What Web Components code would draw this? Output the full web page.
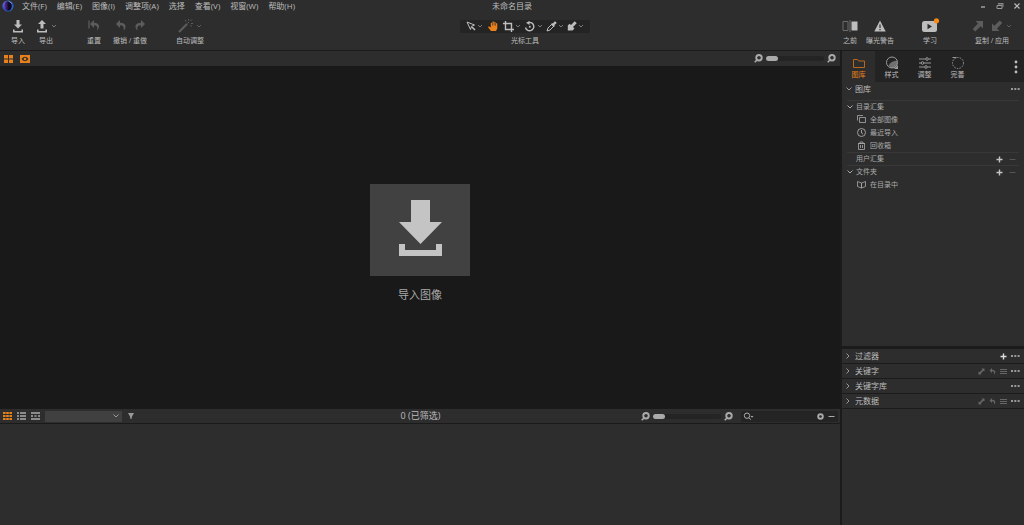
<!DOCTYPE html>
<html lang="zh-CN">
<head>
<meta charset="utf-8">
<meta name="viewport" content="width=device-width, initial-scale=1">
<title>未命名目录</title>
<style>
html, body { margin: 0; background: #1b1b1b; }
body {
  --panel: #2d2d2d; --dark: #232323; --line: #1a1a1a; --text: #bdbdbd; --dim: #5c5c5c; --accent: #e8811a;
  color: var(--text);
  font: 8px/12px "Open Sans", "Noto Sans CJK SC", sans-serif;
}
</style>
</head>
<body>
<photo-app></photo-app>
<script>
const RESET = `*{box-sizing:border-box}button,input,select{font:inherit;color:inherit;background:none;border:0;padding:0;margin:0;border-radius:0;outline-offset:-1px}button{display:flex;align-items:center;justify-content:center;cursor:pointer}ul{list-style:none;margin:0;padding:0}`;

function define(name, render) {
  customElements.define(name, class extends HTMLElement {
    constructor() { super(); this.attachShadow({ mode: 'open' }); }
    connectedCallback() {
      const t = document.createElement('template');
      const { css, html } = render(this);
      t.innerHTML = `<style>${RESET}${css}</style>${html}`;
      this.shadowRoot.replaceChildren(t.content.cloneNode(true));
    }
  });
}

const S = 'fill="none" stroke="currentColor"';
const ICONS = {
  logo: [12, 12, '<defs><linearGradient id="g" x1="0" y1="0" x2="1" y2="1"><stop stop-color="#6a7be0"/><stop offset=".5" stop-color="#2a4fc0"/><stop offset="1" stop-color="#2c6fd0"/></linearGradient><linearGradient id="h" x1="0" x2="1"><stop stop-color="#6d2fb4"/><stop offset=".6" stop-color="#0c0a20"/></linearGradient></defs><circle cx="6" cy="6" r="5.600" fill="url(#g)"/><ellipse cx="6" cy="6" rx="3.800" ry="4.800" fill="url(#h)"/><path d="M6.500 1 10 3.500" stroke="#7ab8e8" stroke-width=".8"/>'],
  import: [12, 13, '<path d="M4.500 0h3v4.500H10L6 8.500 2 4.500h2.500zM1 9.500h1.600V11h6.800V9.500H11v3H1z" fill="currentColor"/>'],
  export: [12, 13, '<path d="M4.500 8.500h3V4H10L6 0 2 4h2.500zM1 9.500h1.600V11h6.800V9.500H11v3H1z" fill="currentColor"/>'],
  undo: [12, 12, '<path d="M5 0 1 4l4 4V5.300c3 0 4.500 1.600 3.400 5.400C12.500 6.500 10.500 2.700 5 2.700z" fill="currentColor"/>'],
  redo: [12, 12, '<path d="M7 0l4 4-4 4V5.300c-3 0-4.500 1.600-3.400 5.400C-.5 6.500 1.500 2.700 7 2.700z" fill="currentColor"/>'],
  reset: [12, 12, '<path d="M1 .5v8" stroke="currentColor" stroke-width="1.300"/><path d="M6 0 2 4l4 4V5.300c3 0 4 1.600 2.900 5.400C13 6.500 11 2.700 6 2.700z" fill="currentColor"/>'],
  wand: [15, 14, '<path d="M1 13 9 5" stroke="currentColor" stroke-width="2.200"/><path d="M9.500 4.500 11 3M10.500 0v1.500M7 1l1.200 1.500M14 .5l-1.500 1.500M15 4.500h-2M13.500 7.500l-1-1.500" stroke="currentColor"/>'],
  chev: [6, 6, `<path d="M1 2l2 2 2-2" ${S}/>`],
  chevR: [6, 8, `<path d="M1.500 1.500 4 4 1.500 6.500" ${S}/>`],
  chevD: [8, 6, `<path d="M1.500 1.500 4 4l2.500-2.500" ${S}/>`],
  cursor: [10, 10, `<path d="M1 1l7.500 3-3 1.300L4.500 8.500z" ${S}/><path d="M6 6l3 3" ${S} stroke-width="1.500"/>`],
  hand: [10, 10, '<path d="M3 10 .2 6.500Q0 5 1.300 5.500L2.800 6.600V2q.6-.9 1.200 0v2.500h.5V.8q.6-.9 1.300 0v3.700h.5V1.200q.6-.9 1.200 0v3.500H8V2.500q.7-.9 1.300 0V7.500L8 10z" fill="currentColor"/>'],
  crop: [11, 11, `<path d="M2.500 0v8.500H11M0 2.500h8.500V11" ${S} stroke-width="1.400"/>`],
  rotate: [12, 11, `<path d="M4.500 1.500A4.200 4.200 0 1 1 1.500 6.500" ${S} stroke-width="1.400"/><path d="M5.500 0v4L2 1.800z" fill="currentColor"/><circle cx="5.800" cy="5.700" r="1" fill="currentColor"/>`],
  picker: [11, 11, `<path d="M1 10l1-3 4-4 2 2-4 4z" ${S}/><path d="M5 3.500 6 2l1 .5L8.500.5q2-.5 2 1.700L8.500 4l.3 1.300L7.500 6z" fill="currentColor"/>`],
  brush: [10, 10, '<path d="M7.700.3 9.700 2.300 6 6l1.500 1.500L5.500 9.500H.8V4.500L2.500 2.700 4 4z" fill="currentColor"/>'],
  before: [16, 14, '<path d="M1 2.500h5v9H1z" fill="none" stroke="#6c6c6c"/><path d="M8 1v12" stroke="#6c6c6c"/><path d="M9.500 2.500h6v9h-6z" fill="currentColor"/>'],
  warn: [12, 12, '<path d="M6 .5 11.700 11.500H.3z" fill="currentColor"/><path d="M6 4.500v3.500M6 9v1.200" stroke="#2d2d2d" stroke-width="1.200"/>'],
  learn: [18, 16, '<rect x="1" y="3" width="15" height="11" rx="2.500" fill="currentColor"/><path d="M6.500 5.800v5.400L11 8.500z" fill="#2d2d2d"/><circle cx="15.500" cy="2.800" r="2.600" fill="#f58a16"/>'],
  copy: [12, 12, '<path d="M3.500 1H11v7.500L8.700 6.200 3.200 11.500.7 9l5.300-5.500z" fill="currentColor"/>'],
  apply: [12, 12, '<path d="M1 3.500 3.300 5.800 8.800.5l2.500 2.500L6 8.500 8.500 11H1z" fill="currentColor"/>'],
  min: [6, 6, '<path d="M1 4h4" stroke="currentColor" stroke-width="1.200"/>'],
  restore: [8, 8, '<path d="M2 1h5.500v4H6.500V2.500H2z" fill="#888"/><path d="M1 3.500h5v3H1z" fill="none" stroke="#999"/>'],
  close: [6, 6, `<path d="M.5.5l5 5M5.500.5l-5 5" ${S} stroke-width="1.200"/>`],
  grid4: [9, 8, '<path d="M0 0h4v3.500H0zM5 0h4v3.500H5zM0 4.500h4V8H0zM5 4.500h4V8H5z" fill="currentColor"/>'],
  proof: [10, 8, '<path d="M0 0h10v8H0z" fill="currentColor"/><path d="M1.500 4Q5-.5 8.500 4 5 8.500 1.500 4z" fill="#2d2d2d"/><circle cx="5" cy="4" r="1.300" fill="currentColor"/>'],
  zoomOut: [9, 9, `<circle cx="5" cy="3.700" r="2.700" ${S} stroke-width="2"/><path d="M3 6 .7 8.300" ${S} stroke-width="1.600"/><path d="M3.500 3.700h3" stroke="#333"/>`],
  zoomIn: [9, 9, `<circle cx="5" cy="3.700" r="2.700" ${S} stroke-width="2"/><path d="M3 6 .7 8.300" ${S} stroke-width="1.600"/><path d="M3.500 3.700h3M5 2.200v3" stroke="#333"/>`],
  folder: [12, 11, `<path d="M.5 9.500v-8h4l1.200 1.500h5.800v6.500z" ${S}/>`],
  style: [14, 14, `<circle cx="7" cy="6.500" r="5.500" ${S}/><path d="M12 4.500Q6 5 3.500 9.500L6 12h4l2.500-4z" fill="currentColor" opacity=".65"/><path d="M9 13l4-4v4z" fill="currentColor"/>`],
  sliders: [12, 12, `<path d="M0 2h6.500M9.500 2H12M0 6h2M5 6h7M0 10h5.500M8.500 10H12" ${S}/><circle cx="8" cy="2" r="1.300" ${S}/><circle cx="3.500" cy="6" r="1.300" ${S}/><circle cx="7" cy="10" r="1.300" ${S}/>`],
  refine: [14, 14, `<circle cx="7" cy="7" r="5.500" ${S} stroke-dasharray="1.500 1.200"/><path d="M1.500 1.500h4" ${S}/>`],
  dotsV: [4, 14, '<circle cx="2" cy="2" r="1.400" fill="currentColor"/><circle cx="2" cy="7" r="1.400" fill="currentColor"/><circle cx="2" cy="12" r="1.400" fill="currentColor"/>'],
  dots: [9, 4, '<path d="M0 1h2v2H0zM3.300 1h2v2h-2zM6.600 1h2v2h-2z" fill="currentColor"/>'],
  stack: [9, 9, `<path d="M.5 5.500v-5h5.500M2.500 2.500h6v5h-6z" ${S} stroke-width=".8"/>`],
  clock: [9, 9, `<circle cx="4.500" cy="4.500" r="4" ${S} stroke-width=".9"/><path d="M4.500 2v3l1.500 1" ${S} stroke-width=".9"/>`],
  bin: [9, 9, `<path d="M1.500 2.500h6v6h-6zM1 2.500h7M3 2.500v-1.500h3v1.500M3.500 4v3M5.500 4v3" ${S} stroke-width=".8"/>`],
  book: [9, 9, `<path d="M4.500 3v5L.5 6.500v-5zV8l4-1.500v-5L4.500 3" ${S} stroke-width=".8"/>`],
  plus: [7, 7, `<path d="M3.500.5v6M.5 3.500h6" ${S} stroke-width="1.400"/>`],
  minus: [7, 7, `<path d="M.5 3.500h6" ${S}/>`],
  adjust: [7, 7, '<path d="M6.500.5v3L5.500 2.700 2.700 5.400 3.500 6.500H.5V3.500l1 .8L4.400 1.500 3.500.5z" fill="currentColor"/>'],
  undoS: [7, 7, '<path d="M3 0 .5 2.500 3 5V3.300c1.800 0 2.500 1 2 3.400C7.500 4 6.300 1.700 3 1.700z" fill="currentColor"/>'],
  lines: [7, 7, `<path d="M0 1.500h7M0 3.500h7M0 5.500h7" ${S}/>`],
  thumbs: [9, 8, '<path d="M0 0h2.600v2H0zM3.200 0h2.600v2H3.200zM6.400 0H9v2H6.400zM0 3h2.600v2H0zM3.200 3h2.600v2H3.200zM6.400 3H9v2H6.400zM0 6h2.600v2H0zM3.200 6h2.600v2H3.200zM6.400 6H9v2H6.400z" fill="currentColor"/>'],
  list: [9, 8, `<path d="M0 1h2M0 4h2M0 7h2M3 1h6M3 4h6M3 7h6" ${S} stroke-width="1.500"/>`],
  strip: [9, 8, `<path d="M0 1h9M0 7h9M0 4h2M3.500 4h2M7 4h2" ${S} stroke-width="1.400"/>`],
  funnel: [6, 6, '<path d="M0 0h6L4 3.500 3.500 6h-1L2 3.500z" fill="currentColor"/>'],
  search: [11, 9, `<circle cx="4" cy="3.700" r="2.700" ${S}/><path d="M6 5.700 7.700 7.700" ${S}/><path d="M7.500 4h3L9 5.700z" fill="currentColor"/>`],
  clear: [7, 7, `<circle cx="3.500" cy="3.500" r="2.300" ${S} stroke-width="1.900"/>`],
  download: [43, 56, '<path d="M12 0h19v22h12L21.500 44 0 22h12zM0 44h6v6h31v-6h6v12H0z" fill="currentColor"/>'],
};

define('app-icon', el => {
  const [w, h, body] = ICONS[el.getAttribute('name')];
  return { css: ':host{display:block;flex:none}svg{display:block}',
    html: `<svg width="${w}" height="${h}" viewBox="0 0 ${w} ${h}" aria-hidden="true">${body}</svg>` };
});
const ic = (n, cls = '') => `<app-icon name="${n}" class="${cls}"></app-icon>`;
const ib = (n, label, cls = '') => `<button class="${cls}" aria-label="${label}">${ic(n)}</button>`;

define('title-bar', () => ({
  css: `:host{display:grid;grid-template-columns:1fr auto 1fr;align-items:center;height:12px;background:var(--panel)}
    nav{display:flex;align-items:center;gap:10px;padding-left:2px}
    nav app-icon{margin-right:-2px}
    .win{display:flex;justify-content:flex-end;align-items:center;gap:10px;padding-right:4px}`,
  html: `<nav>${ic('logo')}${['文件(F)', '编辑(E)', '图像(I)', '调整项(A)', '选择', '查看(V)', '视窗(W)', '帮助(H)'].map(t => `<button>${t}</button>`).join('')}</nav>
    <span>未命名目录</span>
    <div class="win">${ib('min', '最小化')}${ib('restore', '还原')}${ib('close', '关闭')}</div>`
}));

define('tool-group', () => ({
  css: `:host{display:flex;flex-direction:column;align-items:center;gap:2px;min-width:28px;font-size:7px;line-height:10px;white-space:nowrap}
    .icons{display:flex;align-items:center;justify-content:center;height:16px}`,
  html: `<div class="icons"><slot name="icon"></slot></div><slot></slot>`
}));

define('main-toolbar', () => {
  const b = (n, l, c = '') => `<button slot="icon" class="${c}" aria-label="${l}">${ic(n)}</button>`;
  const cursors = [['cursor', '选择'], ['hand', '平移'], ['crop', '裁剪'], ['rotate', '旋转'], ['picker', '拾色'], ['brush', '画笔']];
  return {
    css: `:host{display:grid;grid-template-columns:1fr auto 1fr;height:38px;padding-top:6px;background:var(--panel)}
      .left,.right{display:flex}
      .left{padding-left:4px}
      .right{justify-content:flex-end;gap:2px;padding-right:10px}
      .off{color:var(--dim)}
      .gap{margin-left:20px}
      .near{margin-left:16px}
      .far{margin-left:24px}
      .wide{min-width:44px}
      .more{margin-left:3px;color:#777}
      .more.off{color:var(--dim)}
      .space{margin-left:7px}
      .center{margin-left:26px}
      .cursors{display:flex;align-items:center;justify-content:space-between;width:130px;height:13px;padding:0 6px;border-radius:2px;background:#242424}
      .cursors button{gap:1px}
      .cursors .active{margin:0 2px;color:var(--accent)}
      .cursors .small{color:#777}`,
    html: `<div class="left">
        <tool-group>${b('import', '导入')}导入</tool-group>
        <tool-group>${b('export', '导出')}${b('chev', '导出选项', 'more')}导出</tool-group>
        <tool-group class="gap">${b('reset', '重置', 'off')}重置</tool-group>
        <tool-group class="wide">${b('undo', '撤销', 'off')}${b('redo', '重做', 'off space')}撤销 / 重做</tool-group>
        <tool-group class="wide near">${b('wand', '自动调整', 'off')}${b('chev', '自动调整选项', 'off more')}自动调整</tool-group>
      </div>
      <tool-group class="center"><div slot="icon" class="cursors">${cursors.map(([n, l]) =>
        `<button aria-label="${l}" class="${n === 'hand' ? 'active' : ''}">${ic(n)}${n === 'hand' ? '' : ic('chev', 'small')}</button>`).join('')}</div>光标工具</tool-group>
      <div class="right">
        <tool-group>${b('before', '之前')}之前</tool-group>
        <tool-group>${b('warn', '曝光警告')}曝光警告</tool-group>
        <tool-group class="gap">${b('learn', '学习')}学习</tool-group>
        <tool-group class="wide far">${b('copy', '复制', 'off')}${b('apply', '应用', 'off space')}${b('chev', '应用选项', 'off more')}复制 / 应用</tool-group>
      </div>`
  };
});

define('zoom-slider', () => ({
  css: `:host{display:flex;align-items:center;gap:3px;color:#aaa}
    input{appearance:none;width:var(--track,58px);height:5px;border-radius:3px;background:#242424}
    input::-webkit-slider-thumb{appearance:none;width:12px;height:5px;border-radius:3px;background:#aaa}`,
  html: `${ib('zoomOut', '缩小')}<input type="range" min="0" max="100" value="0" aria-label="缩放">${ib('zoomIn', '放大')}`
}));

define('viewer-bar', () => ({
  css: `:host{display:flex;align-items:center;justify-content:space-between;height:15px;padding:0 4px;background:var(--panel)}
    div{display:flex;gap:7px;color:var(--accent)}`,
  html: `<div>${ib('grid4', '多视图')}${ib('proof', '校样')}</div><zoom-slider></zoom-slider>`
}));

define('import-drop', () => ({
  css: `:host{display:flex;flex-direction:column;align-items:center;justify-content:center;background:#191919;padding-top:11px}
    button{flex-direction:column;gap:12px;font-size:11px;line-height:14px;color:#aaa}
    span{display:flex;align-items:center;justify-content:center;width:100px;height:92px;padding-bottom:4px;background:#414141;color:#c4c4c4}`,
  html: `<button><span>${ic('download')}</span>导入图像</button>`
}));

define('browser-bar', () => ({
  css: `:host{display:grid;grid-template-columns:1fr auto 1fr;align-items:center;height:16px;padding:0 2px 0 3px;background:var(--panel);border-top:1px solid var(--line);border-bottom:1px solid var(--line)}
    .left,.right{display:flex;align-items:center}
    .left{gap:5px;color:#aaa}
    .on{color:var(--accent)}
    .count{font-size:9px}
    .pick{display:grid;align-items:center;width:77px}
    .pick>*{grid-area:1/1}
    .pick app-icon{justify-self:end;margin-right:2px;pointer-events:none;color:#999}
    select{appearance:none;width:100%;height:11px;background:#404040}
    .funnel{margin-left:1px;color:#999}
    .right{justify-content:flex-end;gap:8px;--track:68px}
    .find{display:flex;align-items:center;gap:4px;width:97px;height:11px;padding:0 3px 0 2px;background:#242424;color:#aaa}
    .find input{flex:1;min-width:0;height:9px}`,
  html: `<div class="left">${ib('thumbs', '网格视图', 'on')}${ib('list', '列表视图')}${ib('strip', '胶片视图')}
      <div class="pick"><select aria-label="排序方式"><option></option></select>${ic('chevD')}</div>${ib('funnel', '排序方向', 'funnel')}</div>
    <span class="count">0 (已筛选)</span>
    <div class="right"><zoom-slider></zoom-slider><div class="find">${ic('search')}<input type="text" aria-label="搜索">${ib('clear', '清除')}${ib('minus', '收起')}</div></div>`
}));

define('tool-tabs', () => ({
  css: `:host{display:flex;height:31px;background:var(--dark);font-size:7px;line-height:10px}
    button{flex-direction:column;width:33px}
    .tab{justify-content:flex-start;padding-top:5px}
    .box{display:flex;align-items:center;height:14px}
    .tab .box{color:#999}
    .on{background:var(--panel);color:var(--accent)}
    .on .box{color:#b8681c}
    .menu{width:12px;margin-left:auto;margin-right:2px}`,
  html: [['folder', '图库'], ['style', '样式'], ['sliders', '调整'], ['refine', '完善']].map(([n, t], i) =>
    `<button class="tab ${i ? '' : 'on'}"><span class="box">${ic(n)}</span>${t}</button>`).join('') + ib('dotsV', '更多', 'menu')
}));

define('library-tree', () => ({
  css: `:host{display:block;padding:0 5px;font-size:7px;color:#aaa}
    li{display:flex;align-items:center;height:13px}
    li.sec{border-top:1px solid #383838}
    button{gap:4px}
    .sec>button:first-child{gap:2px}
    .sec>.flat{padding-left:9px}
    .kid{padding-left:10px}
    .add{margin-left:auto;color:#c4c4c4}
    .del{margin:0 3px 0 6px;color:#555}
    .sec app-icon[name=chevD]{margin-left:-1px}`,
  html: `<ul>
    <li class="sec"><button>${ic('chevD')}目录汇集</button></li>
    <li class="kid"><button>${ic('stack')}全部图像</button></li>
    <li class="kid"><button>${ic('clock')}最近导入</button></li>
    <li class="kid"><button>${ic('bin')}回收箱</button></li>
    <li class="sec"><button class="flat">用户汇集</button>${ib('plus', '添加汇集', 'add')}${ib('minus', '移除汇集', 'del')}</li>
    <li class="sec"><button>${ic('chevD')}文件夹</button>${ib('plus', '添加文件夹', 'add')}${ib('minus', '移除文件夹', 'del')}</li>
    <li class="kid"><button>${ic('book')}在目录中</button></li></ul>`
}));

define('tool-header', el => ({
  css: `:host{display:flex;align-items:center;height:14px;padding:0 4px 0 3px;background:var(--panel)}
    .name{gap:3px}
    .name app-icon{width:7px;color:#999}
    .acts{display:flex;align-items:center;gap:4px;margin-left:auto;color:#999}
    .off{color:#666}
    .plus{color:#ddd}`,
  html: `<button class="name">${ic(el.hasAttribute('open') ? 'chevD' : 'chevR')}<slot></slot></button><div class="acts">${
    el.hasAttribute('add') ? ib('plus', '添加', 'plus') : ''}${
    el.hasAttribute('edit') ? ib('adjust', '调整', 'off') + ib('undoS', '重置', 'off') + ib('lines', '预设', 'off') : ''}${ib('dots', '更多')}</div>`
}));

define('tool-panel', () => ({
  css: `:host{display:flex;flex-direction:column}
    .lib{flex:1;margin-bottom:3px;background:var(--panel)}
    .lib tool-header{margin-bottom:4px}
    .stack{display:grid;gap:1px}
    .rest{height:116px;margin-top:1px;background:var(--panel)}`,
  html: `<tool-tabs></tool-tabs>
    <section class="lib"><tool-header open>图库</tool-header><library-tree></library-tree></section>
    <div class="stack"><tool-header add>过滤器</tool-header><tool-header edit>关键字</tool-header><tool-header>关键字库</tool-header><tool-header edit>元数据</tool-header></div>
    <div class="rest"></div>`
}));

define('photo-app', () => ({
  css: `:host{display:flex;flex-direction:column;min-height:100vh}
    main{flex:1;display:grid;grid-template-columns:minmax(0,1fr) 182px;column-gap:2px;margin-top:1px}
    .work{display:flex;flex-direction:column}
    import-drop{flex:1}
    .browser{height:101px;background:var(--panel)}`,
  html: `<title-bar></title-bar><main-toolbar></main-toolbar>
    <main><div class="work"><viewer-bar></viewer-bar><import-drop></import-drop><browser-bar></browser-bar><div class="browser"></div></div><tool-panel></tool-panel></main>`
}));
</script>
</body>
</html>
